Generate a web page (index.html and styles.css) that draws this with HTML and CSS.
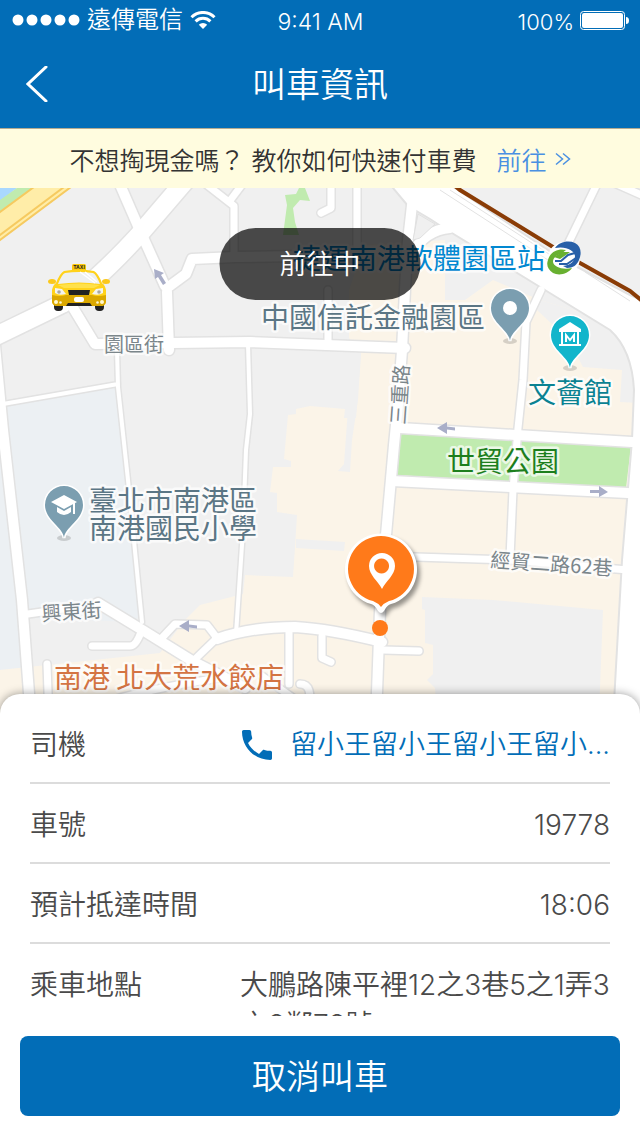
FILE: index.html
```html
<!DOCTYPE html>
<html lang="zh-Hant">
<head>
    <meta charset="UTF-8">
    <meta name="viewport" content="width=device-width, initial-scale=1.0">
    <title>叫車資訊</title>
    <link rel="stylesheet" href="styles.css">
</head>
<body>
    <header class="header">
        <div class="status-bar">
            <div class="status-left">
                <svg class="signal" viewBox="0 0 68 12" aria-hidden="true">
                    <circle cx="6" cy="6" r="5.5"/><circle cx="20" cy="6" r="5.5"/><circle cx="34" cy="6" r="5.5"/><circle cx="48" cy="6" r="5.5"/><circle cx="62" cy="6" r="5.5"/>
                </svg>
                <span class="carrier">遠傳電信</span>
                <svg class="wifi" viewBox="0 0 26 18" aria-hidden="true">
                    <path d="M1.5 6.2a16.3 16.3 0 0 1 23 0" fill="none" stroke="#fff" stroke-width="3"/>
                    <path d="M5.600 10.400a10.500 10.500 0 0 1 14.800 0" fill="none" stroke="#fff" stroke-width="3"/>
                    <path d="M13 18l-4.200-4.300a6 6 0 0 1 8.400 0z"/>
                </svg>
            </div>
            <span class="time">9:41 AM</span>
            <div class="status-right">
                <span>100%</span>
                <svg class="battery" viewBox="0 0 49 19" aria-hidden="true">
                    <rect x=".5" y=".5" width="44" height="18" rx="3" fill="none" stroke="#fff"/>
                    <rect x="2" y="2" width="41" height="15" rx="2"/>
                    <path d="M46 6q3 0 3 3.500t-3 3.500z"/>
                </svg>
            </div>
        </div>
        <nav class="nav">
            <button class="back" type="button" aria-label="返回">
                <svg viewBox="0 0 22 36"><path d="M20 1L2 18l18 17" fill="none" stroke="#fff" stroke-width="3" stroke-linecap="round"/></svg>
            </button>
            <h1>叫車資訊</h1>
        </nav>
    </header>

    <div class="notice">
        <span>不想掏現金嗎？ 教你如何快速付車費</span>
        <a href="#pay">前往
            <svg viewBox="0 0 16 14" aria-hidden="true"><path d="M1 1.500l6.500 5.500L1 12.500M8 1.500l6.500 5.500L8 12.500" fill="none" stroke="currentColor" stroke-width="1.500"/></svg>
        </a>
    </div>

    <main class="map">
        <svg class="map-canvas" viewBox="0 188 640 526" preserveAspectRatio="xMidYMin slice">
            <defs>
                <!-- drawn twice: grey edge first, white surface on top -->
                <g id="roads">
                    <path class="road-l" d="M-6 335L3 430L22 600L31 720"/>
                    <path class="road-xl" d="M-8 338L62 304Q92 286 138 236L186 180"/>
                    <path class="road-l" d="M118 180L138 226L165 286"/>
                    <path class="road-l" d="M167 292L169 350M167 288L186 274L192 259L235 257L300 256"/>
                    <path class="road-m" d="M202 181L234 206L234 256M229 202L244 182"/>
                    <path class="road-l" d="M72 306L95 344L250 342L405 348"/>
                    <path class="road-s" d="M117 350L118 387L128 480L142 622M3 404L118 384M248 344L250 414L246 450L243 530L236 634"/>
                    <path class="road-m" d="M331 182L331 208L321 213M357 182L357 245M328 290L328 345M598 182L567 246M612 182L646 197"/>
                    <path class="road-l" d="M412 205L407 250L402 350L398 405L394 445L386 535L380 610L376 720"/>
                    <path class="road-l" d="M450 228Q422 230 407 262"/>
                    <path class="road-m" d="M541 290L526 322L523 380L518 428L513 490L510 558"/>
                    <path class="road-l" d="M400 428L632 442M392 481L628 493"/>
                    <path class="road-m" d="M384 556L510 560L628 570M28 614L70 608"/>
                    <path class="road-l" d="M98 603L144 631L194 662L245 688"/>
                    <path class="road-m" d="M92 646L130 646Q136 646 141 632M160 640L175 624L207 625L217 638L190 664"/>
                    <path class="road-l" d="M217 639Q250 627 295 627Q330 629 382 642"/>
                    <path class="road-m" d="M47 664L49 720M289 630L289 684M322 636L322 658L331 662M383 650L419 651M96 705Q150 688 220 678M262 676L310 710M300 684Q314 684 308 710"/>
                </g>
            </defs>

            <!-- land -->
            <rect class="land" y="188" width="640" height="540"/>
            <path class="campus" d="M0 405L117 387L142 612L134 622L28 618L28 667L0 670z"/>
            <path class="block" d="M288 415L296 414L296 409L310 406L345 409L344 418L356 418L361 353L349 338L349 290L364 245L445 240L445 300L465 300L493 280L540 300L640 330L640 714L0 714L0 670L160 653L184 621L200 605L243 594L245 575L293 577L295 547L297 515L277 512L277 493L270 492L273 467L291 467L291 461L284 459z"/>
            <path class="land" d="M296 539L345 542L344 551L296 548zM352 353L361 353L358 400L352 440L350 472L338 471L344 464zM540 300L537 310L553 325L573 348L583 367L622 370L620 402L640 403L640 330zM422 597L493 600L603 610L599 714L437 714L435 688L427 680L433 674L433 645L425 643L425 610L422 609z"/>
            <path class="park" d="M401 431L631 446L626 488L396 475zM285 195L296 194L299 188L305 188L310 201L300 200L293 208L295 222L299 235L283 235L287 205z"/>

            <!-- river bank and expressway -->
            <path fill="#a9d8ff" d="M0 188h17L0 201z"/>
            <path class="park" d="M17 188h18L0 214v-14z"/>
            <path fill="#ffeda8" stroke="#f6ca60" stroke-width="2" d="M-4 215L38 184H75L-4 243z"/>
            <path fill="none" stroke="#f6ca60" stroke-width="2" d="M-4 238L68 184"/>

            <use href="#roads" class="road-edge"/>
            <path class="highway" d="M388 182L408 206L430 219L447 230L540 287L610 330Q632 350 634 390L632 440L622 560L613 720H650V304L630 295L560 258L446 182z"/>
            <use href="#roads" class="road-top"/>
            <path fill="#f0f0f0" stroke="#e0e0e0" d="M418 214L435 224L420 238L413 240z"/>
            <path fill="none" stroke="#e2e2e2" d="M440 190L548 260M585 272L630 301M450 190L552 256"/>
            <path fill="none" stroke="#8a3c06" stroke-width="4" d="M450 182L460 190L553 247L580 263L630 291L646 304"/>

            <!-- one-way arrows -->
            <g fill="#a9aec8">
                <path d="M437 428l10-6v4.500l8 1v3l-8-1v4.500z"/>
                <path d="M179 626l10-6v4.500l8 1v3l-8-1v4.500z"/>
                <path d="M608 492l-9-6v4h-9v3h9v4z"/>
                <path d="M154 269l10 4-3 2 5 8-3 2-5-8-3 2z"/>
            </g>

            <!-- place names -->
            <g class="labels">
                <text class="street" x="104" y="352">園區街</text>
                <text class="street" x="42" y="621" transform="rotate(-4 42 621)">興東街</text>
                <text class="street" x="490" y="567" transform="rotate(4 490 567)">經貿二路62巷</text>
                <text class="street" x="405" y="425" transform="rotate(-86 405 425)">三重路</text>
                <text class="metro" x="293" y="269">捷運南港軟體園區站</text>
                <text class="place" x="261" y="328">中國信託金融園區</text>
                <text class="museum" x="528" y="403">文薈館</text>
                <text class="garden" x="447" y="472">世貿公園</text>
                <text class="place" x="89" y="511">臺北市南港區</text>
                <text class="place" x="89" y="539">南港國民小學</text>
                <text class="food" x="54" y="688">南港 北大荒水餃店</text>
            </g>

            <!-- metro logo -->
            <g transform="translate(564 258)">
                <circle r="16" fill="#fff"/>
                <path fill="#2860a8" d="M-9-10C-5-16 4-18 11-15C17-12 18-5 15 2C13 7 9 10 3 10L-1 8C7 7 11 3 11-2C10-8 2-12-9-10z"/>
                <path fill="#68b030" d="M-16 2C-14-6-6-10 2-8L-3-4C-8-3-11 0-11 4C-10 9-2 12 8 10C4 16-5 18-11 15C-16 12-18 7-16 2z"/>
                <path fill="#68b030" d="M-10-1L-2-6L6-6L2-3L-4 1z"/>
                <path fill="none" stroke="#2860a8" stroke-width="2" d="M-9 3L-3 3L4-3L11-5M-5 6L3 6L12 0"/>
            </g>

            <!-- place pins -->
            <g>
                <ellipse class="pin-shadow" cx="510" cy="341" rx="7" ry="3"/>
                <ellipse class="pin-shadow" cx="570" cy="368" rx="7" ry="3"/>
                <ellipse class="pin-shadow" cx="64" cy="538" rx="7" ry="3"/>
                <path class="pin" fill="#7b9eb0" d="M510 341C509 330 491 323 491 308A19 19 0 0 1 529 308C529 323 511 330 510 341z"/>
                <circle cx="510" cy="308" r="7" fill="#fff"/>
                <path class="pin" fill="#12b5cb" d="M570 368C569 357 551 350 551 335A19 19 0 0 1 589 335C589 350 571 357 570 368z"/>
                <path fill="none" stroke="#fff" stroke-width="2" d="M562 331v13M578 331v13M559 345h22"/>
                <path fill="#fff" d="M570 322l11 7v3h-22v-3z"/>
                <path fill="none" stroke="#fff" stroke-width="2" d="M566 342v-7l4 5 4-5v7"/>
                <path class="pin" fill="#7b9eb0" d="M64 538C63 527 45 520 45 505A19 19 0 0 1 83 505C83 520 65 527 64 538z"/>
                <path fill="#fff" d="M64 495l13 7-13 7-13-7zM57 507l7 4 7-4v5q-7 6-14 0zM73 504l2-1v11h-2z"/>
            </g>

            <!-- taxi -->
            <g transform="translate(48 264)">
                <rect x="24" y="0" width="14" height="8" rx="1.500" fill="#fcc90c"/>
                <text class="taxi-sign" x="31" y="5">TAXI</text>
                <rect x="6" y="34" width="9" height="13" rx="4" fill="#222"/>
                <rect x="47" y="34" width="9" height="13" rx="4" fill="#222"/>
                <ellipse cx="4" cy="17.500" rx="4" ry="2.500" fill="#fbc81a"/>
                <ellipse cx="58" cy="17.500" rx="4" ry="2.500" fill="#fbc81a"/>
                <path fill="#ffd21a" d="M4 26Q5 21 8 19Q12 9 16 7Q31 4 46 7Q50 9 54 19Q57 21 58 26V38Q57 42 53 42H9Q5 42 4 38z"/>
                <path fill="#eef0f0" d="M10 20Q14 10 17 9Q31 7 45 9Q48 10 52 20Q31 17 10 20z"/>
                <path fill="none" stroke="#fff" stroke-width="1.500" d="M32 8l15 11M37 8l12 10"/>
                <path fill="#ffe14a" d="M10 21Q31 18 52 21L46 24H16z"/>
                <path fill="#dba800" d="M4 31Q12 33 18 31H44Q50 33 58 31V38Q57 42 53 42H9Q5 42 4 38z"/>
                <path fill="#f4f4ee" d="M7 24l7 1 4 5q-7 2-11-1zM55 24l-7 1-4 5q7 2 11-1z"/>
                <circle cx="11" cy="28" r="1.800" fill="#a9a9a0"/><circle cx="51" cy="28" r="1.800" fill="#a9a9a0"/>
                <path fill="#222" d="M20 26h22l-1 5H21zM20 39h22l2 3H18z"/>
                <rect x="26" y="33" width="10" height="5" rx="2" fill="#fff"/>
                <circle cx="8" cy="38" r="2" fill="#fff8d0"/><circle cx="12.500" cy="38.500" r="1.300" fill="#fff8d0"/>
                <circle cx="54" cy="38" r="2" fill="#fff8d0"/><circle cx="49.500" cy="38.500" r="1.300" fill="#fff8d0"/>
            </g>

            <!-- pick-up point -->
            <g class="pickup">
                <path fill="#fff" d="M371 604A36 36 0 1 1 391 604Q387 605 384 611Q381 615 378 611Q375 605 371 604z"/>
            </g>
            <path fill="#ff7a1a" d="M373 601A33 33 0 1 1 389 601Q384 603 381 607Q378 603 373 601z"/>
            <path fill="#fff" fill-rule="evenodd" d="M382 589C378 581 369 575 369 566A13 13 0 0 1 395 566C395 575 386 581 382 589zM381.500 558.500a7.500 7.500 0 1 0 .1 0z"/>
            <circle cx="380" cy="628" r="8" fill="#ff7a1a"/>
        </svg>
        <div class="ride-status">前往中</div>
    </main>

    <section class="sheet">
        <dl class="details">
            <div class="row">
                <dt>司機</dt>
                <dd>
                    <a class="driver" href="tel:19778">
                        <svg viewBox="3 3 18 18" aria-hidden="true"><path d="M6.620 10.790c1.440 2.830 3.760 5.140 6.590 6.590l2.200-2.200c.27-.27.67-.36 1.020-.24 1.120.37 2.330.57 3.570.57.55 0 1 .45 1 1V20c0 .55-.45 1-1 1-9.390 0-17-7.610-17-17 0-.55.45-1 1-1h3.500c.55 0 1 .45 1 1 0 1.250.2 2.450.57 3.570.11.35.03.74-.25 1.020l-2.200 2.200z"/></svg>
                        <span>留小王留小王留小王留小...</span>
                    </a>
                </dd>
            </div>
            <div class="row">
                <dt>車號</dt>
                <dd>19778</dd>
            </div>
            <div class="row">
                <dt>預計抵達時間</dt>
                <dd>18:06</dd>
            </div>
            <div class="row">
                <dt>乘車地點</dt>
                <dd class="address">大鵬路陳平裡12之3巷5之1弄3之8鄰78號</dd>
            </div>
        </dl>
        <div class="actions">
            <button class="cancel" type="button">取消叫車</button>
        </div>
    </section>
</body>
</html>
```

FILE: styles.css
```css
* {
    box-sizing: border-box;
}
body {
    margin: 0;
    height: 100vh;
    display: flex;
    flex-direction: column;
    overflow: hidden;
    background-color: #fff;
    color: #4a4a4a;
    font-family: Inter, "Noto Sans CJK TC", sans-serif;
    font-size: 28px;
    font-weight: 350;
}
button {
    border: none;
    font-family: inherit;
    font-weight: inherit;
    color: #fff;
    cursor: pointer;
}
a {
    text-decoration: none;
}

/* header */
.header {
    background-color: #026db7;
    color: #fff;
}
.status-bar {
    display: grid;
    grid-template-columns: 1fr auto 1fr;
    align-items: center;
    height: 40px;
    padding: 0 11px 0 12px;
    font-size: 23px;
    line-height: 36px;
}
.status-bar svg {
    fill: #fff;
}
.status-left,
.status-right {
    display: flex;
    align-items: center;
}
.status-left {
    gap: 7px;
}
.status-right {
    justify-content: flex-end;
    gap: 6px;
}
.status-right span {
    font-size: 22px;
}
.time,
.status-right span {
    padding-top: 4px;
}
.carrier {
    font-size: 24px;
}
.signal {
    width: 68px;
    height: 12px;
}
.wifi {
    width: 26px;
    height: 18px;
}
.battery {
    width: 49px;
    height: 19px;
}
.nav {
    display: grid;
    grid-template-columns: 60px 1fr 60px;
    align-items: center;
    height: 88px;
}
.nav h1 {
    margin: 0;
    padding-bottom: 4px;
    font-size: 34px;
    font-weight: inherit;
    text-align: center;
}
.back {
    background: none;
    height: 60px;
    padding: 0 12px 0 26px;
}
.back svg {
    display: block;
    width: 22px;
    height: 36px;
}

/* payment notice */
.notice {
    display: flex;
    justify-content: center;
    align-items: center;
    gap: 20px;
    height: 60px;
    border-top: 1px solid #b5ab91;
    background-color: #fffcdf;
    color: #333;
    font-size: 25px;
    white-space: nowrap;
}
.notice a {
    display: flex;
    align-items: center;
    gap: 8px;
    color: #4a90e2;
}
.notice svg {
    width: 16px;
    height: 14px;
}

/* map */
.map {
    position: relative;
    flex: 1;
    min-height: 0;
}
.map-canvas {
    display: block;
    width: 100%;
    height: 100%;
}
.land {
    fill: #f0f0f0;
}
.block {
    fill: #fbf4e8;
}
.campus {
    fill: #ecf0f3;
}
.park {
    fill: #c0ebaf;
}
.road-edge {
    --edge: 3px;
    stroke: #e2e2e2;
}
.road-top {
    --edge: 0px;
    stroke: #fff;
}
#roads path {
    fill: none;
    stroke-linecap: round;
    stroke-linejoin: round;
}
.road-s {
    stroke-width: calc(4px + var(--edge));
}
.road-m {
    stroke-width: calc(7px + var(--edge));
}
.road-l {
    stroke-width: calc(10px + var(--edge));
}
.road-xl {
    stroke-width: calc(18px + var(--edge));
}
.highway {
    fill: #fff;
    stroke: #e2e2e2;
    stroke-width: 2px;
}
.labels text {
    font-family: "Noto Sans CJK TC", sans-serif;
    font-size: 28px;
    font-weight: 400;
    stroke: rgba(255, 255, 255, 0.7);
    stroke-width: 5px;
    stroke-linejoin: round;
    paint-order: stroke;
}
.labels .street {
    fill: #7b868b;
    font-size: 20px;
}
.metro {
    fill: #0288d1;
}
.place {
    fill: #5b7685;
}
.museum {
    fill: #0a8292;
}
.garden {
    fill: #1d7f1d;
}
.food {
    fill: #d47443;
}
.taxi-sign {
    font-size: 5px;
    font-weight: 700;
    text-anchor: middle;
    fill: #222;
}
.pin {
    stroke: #fff;
    stroke-width: 3px;
    paint-order: stroke;
}
.pin-shadow {
    fill: rgba(0, 0, 0, 0.15);
}
.pickup {
    filter: drop-shadow(3px 4px 2px rgba(0, 0, 0, 0.4));
}
.ride-status {
    position: absolute;
    top: 40px;
    left: 50%;
    transform: translateX(-50%);
    padding: 2px 60px 0;
    border-radius: 36px;
    background-color: rgba(0, 0, 0, 0.7);
    color: #fff;
    font-size: 27px;
    line-height: 70px;
    white-space: nowrap;
}

/* bottom sheet */
.sheet {
    position: relative;
    margin-top: -20px;
    border-radius: 20px 20px 0 0;
    background-color: #fff;
    box-shadow: 0 0 10px rgba(0, 0, 0, 0.4);
}
.details {
    max-height: 322px;
    margin: 0;
    padding: 10px 30px 0;
    overflow-y: auto;
    scrollbar-width: none;
}
.row {
    display: grid;
    grid-template-columns: 210px 1fr;
    padding: 21px 0 17px;
    border-bottom: 2px solid #dcdcdc;
    line-height: 40px;
}
.row dd {
    margin: 0;
    text-align: right;
}
.row .address {
    text-align: left;
    word-break: break-all;
}
.driver {
    display: flex;
    justify-content: space-between;
    align-items: center;
    padding-left: 2px;
    color: #026db7;
    font-size: 27px;
    white-space: nowrap;
}
.driver svg {
    width: 30px;
    height: 30px;
    fill: #026db7;
}
.actions {
    padding: 20px;
}
.cancel {
    display: block;
    width: 100%;
    height: 80px;
    padding: 0 0 4px;
    border-radius: 8px;
    background-color: #026db7;
    font-size: 34px;
}
```
